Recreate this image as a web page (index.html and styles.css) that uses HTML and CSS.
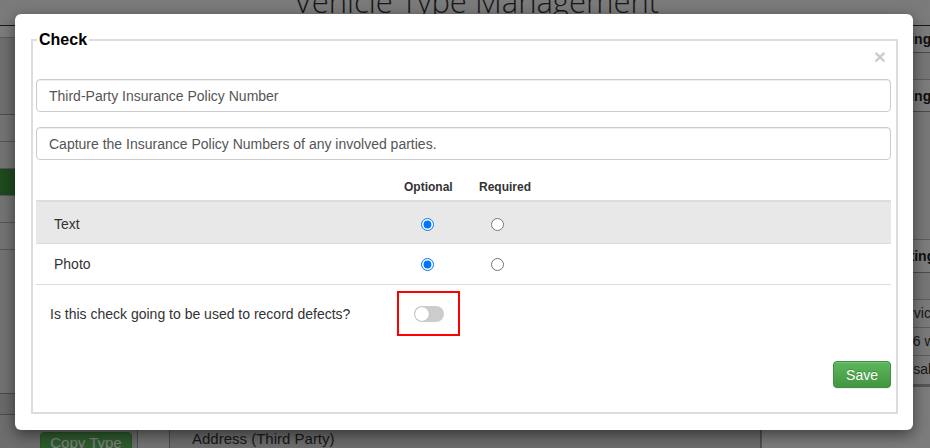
FILE: index.html
```html
<!DOCTYPE html>
<html lang="en">
<head>
<meta charset="utf-8">
<title>Vehicle Type Management</title>
<link rel="stylesheet" href="styles.css">
</head>
<body>
<div class="page">
  <header class="page-head">
    <h1 class="page-title">Vehicle Type Management</h1>
  </header>
  <div class="page-body">
    <aside class="type-list">
      <div class="type-strip"></div>
      <div class="type-search"></div>
      <ul class="types">
        <li>Car</li>
        <li>Van</li>
        <li class="active">HGV</li>
        <li>Minibus</li>
        <li>Motorcycle</li>
      </ul>
      <div class="type-spacer"></div>
      <div class="type-foot"></div>
      <div class="copy-wrap"><button class="btn-copy" type="button">Copy Type</button></div>
    </aside>
    <div class="gutter"></div>
    <main class="check-list">
      <ul class="checks">
        <li>Registration Plate</li>
        <li>Driver Name</li>
        <li>Date of Incident</li>
        <li>Time of Incident</li>
        <li>Location</li>
        <li>Description of Incident</li>
        <li>Witness Details</li>
        <li>Police Reference</li>
        <li>Third-Party Name</li>
        <li>Third-Party Vehicle Registration</li>
        <li>Third-Party Insurer</li>
        <li>Third-Party Insurance Policy Number</li>
        <li>Address (Third Party)</li>
      </ul>
    </main>
    <aside class="settings">
      <div class="settings-title">Vehicle Settings</div>
      <div class="settings-tabs"></div>
      <div class="settings-title settings-title--mid">Check Settings</div>
      <div class="settings-gap"></div>
      <div class="settings-title settings-title--wide">Reminder Settings</div>
      <div class="settings-blank"></div>
      <div class="settings-row settings-row--service">Service</div>
      <div class="settings-row settings-row--interval">26 weeks</div>
      <div class="settings-row settings-row--state">Disabled</div>
    </aside>
  </div>
</div>

<div class="backdrop"></div>

<div class="modal" role="dialog" aria-label="Check">
  <fieldset class="check-set">
    <legend class="check-legend">Check</legend>
    <div class="check-top"><button type="button" class="close" aria-label="Close">&times;</button></div>
    <input class="field" type="text" value="Third-Party Insurance Policy Number">
    <input class="field" type="text" value="Capture the Insurance Policy Numbers of any involved parties.">
    <div class="opts">
      <div class="opts-row opts-head">
        <span></span>
        <span class="th">Optional</span>
        <span class="th">Required</span>
        <span></span>
      </div>
      <div class="opts-row opts-alt">
        <span class="opt-label">Text</span>
        <span class="opt-cell"><input type="radio" name="text" checked></span>
        <span class="opt-cell opt-cell--req"><input type="radio" name="text"></span>
        <span></span>
      </div>
      <div class="opts-row">
        <span class="opt-label">Photo</span>
        <span class="opt-cell"><input type="radio" name="photo" checked></span>
        <span class="opt-cell opt-cell--req"><input type="radio" name="photo"></span>
        <span></span>
      </div>
    </div>
    <div class="defects">
      <span class="defects-label">Is this check going to be used to record defects?</span>
      <div class="highlight">
        <span class="toggle" role="switch" aria-checked="false"><span class="knob"></span></span>
      </div>
    </div>
    <div class="actions">
      <button type="button" class="btn-save">Save</button>
    </div>
  </fieldset>
</div>
</body>
</html>
```

FILE: styles.css
```css
* { box-sizing: border-box; }

html, body { margin: 0; padding: 0; }

body {
  width: 930px;
  height: 448px;
  overflow: hidden;
  position: relative;
  font-family: "Liberation Sans", Arial, sans-serif;
  font-size: 14px;
  color: #333;
  background: #fff;
}

/* ---------- background page ---------- */
.page {
  width: 930px;
  height: 448px;
  display: flex;
  flex-direction: column;
}

.page-head {
  height: 26px;
  flex: none;
  border-bottom: 1px solid #333;
  background: #f6f6f6;
  padding-left: 23px;
  text-align: center;
}

.page-title {
  margin: -11px 0 0;
  font-family: "Open Sans", sans-serif;
  font-weight: 300;
  font-size: 31px;
  line-height: 25px;
  color: #333;
  white-space: nowrap;
}

.page-body {
  flex: 1;
  display: flex;
  min-height: 0;
}

.type-list {
  width: 138px;
  flex: none;
  border-right: 1px solid #999;
  background: #e2e2e2;
  display: flex;
  flex-direction: column;
}

.type-strip {
  height: 12px;
  background: #fafafa;
  border-bottom: 1px solid #bbb;
}

.type-search {
  height: 77px;
  background: #dedede;
  border-bottom: 1px solid #999;
}

.types {
  list-style: none;
  margin: 0;
  padding: 0;
}

.types li {
  height: 27px;
  line-height: 26px;
  padding-left: 24px;
  border-bottom: 1px solid #aaa;
  color: #333;
  background: #e8e8e8;
}

.types li.active {
  background: #3d943f;
  color: #fff;
}

.type-spacer { flex: 1; background: #e6e6e6; }

.type-foot {
  height: 22px;
  border-top: 1px solid #999;
  border-bottom: 1px solid #999;
  background: #d4d4d4;
}

.copy-wrap {
  height: 33px;
  flex: none;
  padding-top: 17px;
  padding-left: 40px;
  background: #dcdcdc;
}

.btn-copy {
  width: 92px;
  height: 34px;
  border: 1px solid #4cae4c;
  border-radius: 4px;
  background: #5cb85c;
  color: #fff;
  font-family: "Liberation Sans", Arial, sans-serif;
  font-size: 15px;
  line-height: 18px;
  padding: 1px 0 0;
  vertical-align: top;
  display: flex;
  justify-content: center;
  align-items: flex-start;
}

.gutter {
  width: 31px;
  flex: none;
  background: #e8e8e8;
}

.check-list {
  width: 592px;
  flex: none;
  border-left: 1px solid #999;
  border-right: 1px solid #999;
  background: #dadada;
  padding-top: 19px;
}

.checks {
  list-style: none;
  margin: 0;
  padding: 0;
}

.checks li {
  height: 32px;
  line-height: 20px;
  padding: 0 22px;
  font-size: 15px;
  color: #333;
}

.settings {
  width: 200px;
  flex: none;
  background: #f8f8f8;
  border-left: 1px solid #aaa;
}

.settings-title {
  height: 27px;
  line-height: 27px;
  text-align: right;
  padding-right: 22px;
  font-weight: bold;
  color: #222;
  border-bottom: 1px solid #999;
  white-space: nowrap;
}

.settings-title--mid { height: 32px; line-height: 32px; }
.settings-title--wide { height: 33px; line-height: 33px; padding-right: 18px; }

.settings-tabs {
  height: 27px;
  background: #ececec;
  border-bottom: 1px solid #bbb;
}

.settings-gap { height: 128px; background: #f0f0f0; border-bottom: 1px solid #bbb; }

.settings-blank {
  height: 27px;
  border-bottom: 1px solid #bbb;
  background: #ececec;
}

.settings-row {
  height: 28px;
  line-height: 27px;
  padding-left: 130px;
  border-bottom: 1px solid #bbb;
  color: #333;
  white-space: nowrap;
  background: #f4f4f4;
}

.settings-row--interval { padding-left: 143px; }
.settings-row--state { padding-left: 138px; border-bottom: 3px solid #aaa; height: 31px; }

/* ---------- overlay ---------- */
.backdrop {
  position: absolute;
  inset: 0;
  background: rgba(0, 0, 0, 0.5);
}

.modal {
  position: absolute;
  left: 15px;
  top: 14px;
  width: 898px;
  height: 416px;
  background: #fff;
  border-radius: 6px;
  box-shadow: 0 5px 15px rgba(0, 0, 0, 0.5);
  padding: 16px 15px 16px 16px;
}

.check-set {
  margin: 0;
  height: 100%;
  border: 2px solid #ddd;
  padding: 0 5px 0 3px;
  min-width: 0;
}

.check-legend {
  margin-left: 1px;
  padding: 0 2px;
  font-size: 16px;
  font-weight: bold;
  line-height: 20px;
  color: #000;
}

.check-top {
  height: 29px;
  display: flex;
  justify-content: flex-end;
  align-items: flex-start;
}

.close {
  margin: 0 5px 0 0;
  padding: 0;
  border: 0;
  background: none;
  font-family: "Liberation Sans", Arial, sans-serif;
  font-size: 21px;
  font-weight: bold;
  line-height: 14px;
  color: #000;
  opacity: 0.2;
  text-shadow: 0 1px 0 #fff;
}

.field {
  display: block;
  width: 100%;
  height: 33px;
  margin: 0 0 15px;
  padding: 0 12px;
  border: 1px solid #ccc;
  border-radius: 4px;
  box-shadow: inset 0 1px 1px rgba(0, 0, 0, 0.075);
  font-family: "Liberation Sans", Arial, sans-serif;
  font-size: 14px;
  color: #555;
  background: #fff;
}

.opts-row {
  display: grid;
  grid-template-columns: 360px 75px 70px 1fr;
  align-items: center;
}

.opts-head {
  height: 27px;
  border-bottom: 2px solid #ddd;
}

.th {
  padding-left: 8px;
  font-size: 12px;
  font-weight: bold;
  color: #333;
  line-height: 25px;
}

.opts-row:not(.opts-head) {
  height: 41px;
  border-bottom: 1px solid #ddd;
}

.opts-row.opts-alt {
  height: 42px;
  padding-top: 3px;
  background: #e8e8e8;
}

.opt-label {
  padding-left: 18px;
  font-size: 14px;
  color: #333;
}

.opt-cell {
  display: flex;
  align-items: center;
  padding-left: 25px;
}

.opt-cell--req { padding-left: 20px; }

.opt-cell input {
  margin: 0;
  width: 13px;
  height: 13px;
}

.defects {
  display: grid;
  grid-template-columns: 360px 1fr;
  align-items: center;
  padding-top: 6px;
}

.defects-label {
  padding-left: 14px;
  padding-top: 1px;
  font-size: 14px;
  color: #333;
}

.highlight {
  width: 63px;
  height: 45px;
  margin-left: 1px;
  border: 2px solid #f00;
  display: flex;
  align-items: center;
  justify-content: center;
}

.toggle {
  position: relative;
  width: 30px;
  height: 16px;
  border-radius: 8px;
  background: #ccc;
}

.knob {
  position: absolute;
  left: 1px;
  top: 1px;
  width: 14px;
  height: 14px;
  border-radius: 50%;
  background: #fff;
  box-shadow: 0 0 1px rgba(0, 0, 0, 0.3);
}

.actions {
  display: flex;
  justify-content: flex-end;
  margin-top: 25px;
}

.btn-save {
  height: 27px;
  padding: 0 12px;
  border: 1px solid #3e8f3e;
  border-radius: 4px;
  background-color: #419641;
  background-image: linear-gradient(to bottom, #5cb85c 0, #419641 100%);
  box-shadow: inset 0 1px 0 rgba(255, 255, 255, 0.15), 0 1px 1px rgba(0, 0, 0, 0.075);
  color: #fff;
  font-family: "Liberation Sans", Arial, sans-serif;
  font-size: 14px;
  text-shadow: 0 -1px 0 rgba(0, 0, 0, 0.2);
}
```
